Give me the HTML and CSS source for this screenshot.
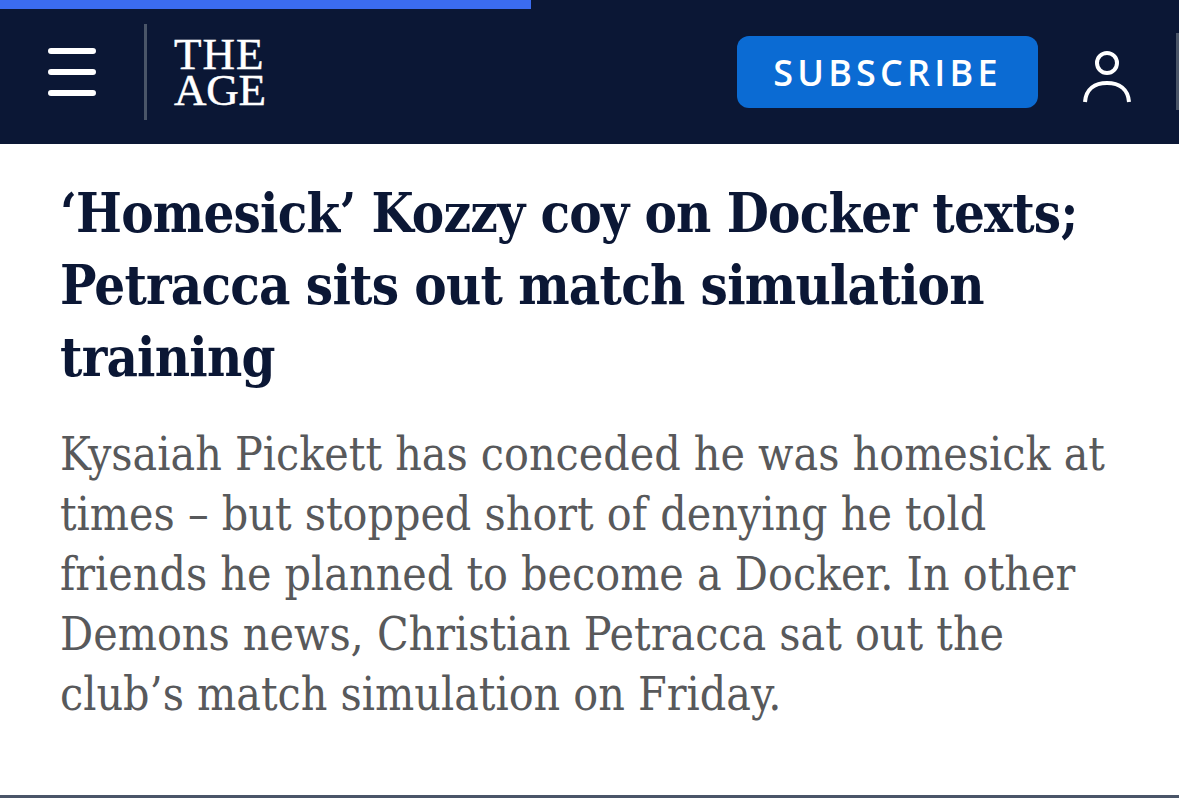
FILE: index.html
```html
<!DOCTYPE html>
<html lang="en">
<head>
<meta charset="utf-8">
<title>The Age</title>
<link rel="stylesheet" href="styles.css">
</head>
<body>
<div class="progress"><div class="progress-fill"></div></div>
<header class="topbar">
  <div class="brand">
    <svg class="menu-icon" viewBox="0 0 48 48" width="48" height="48" aria-hidden="true">
      <path d="M3 3H45M3 24H45M3 45H45" fill="none" stroke="#fff" stroke-width="6" stroke-linecap="round"/>
    </svg>
    <div class="divider"></div>
    <div class="logo"><span class="logo-the">THE</span><span class="logo-age">AGE</span></div>
  </div>
  <div class="actions">
    <div class="subscribe">SUBSCRIBE</div>
    <svg class="user-icon" viewBox="0 0 48 52" width="48" height="52" aria-hidden="true">
      <circle cx="24" cy="12" r="10" fill="none" stroke="#fff" stroke-width="4"/>
      <path d="M2 51C3 38 12 32 24 32S45 38 46 51" fill="none" stroke="#fff" stroke-width="4"/>
    </svg>
    <div class="edge"></div>
  </div>
</header>
<main class="article">
  <h1 class="headline">‘Homesick’ Kozzy coy on Docker texts; Petracca sits out match simulation training</h1>
  <p class="summary">Kysaiah Pickett has conceded he was homesick at times – but stopped short of denying he told friends he planned to become a Docker. In other Demons news, Christian Petracca sat out the club’s match simulation on Friday.</p>
</main>
<div class="rule"></div>
</body>
</html>
```
FILE: styles.css
```css
* { box-sizing: border-box; }
html, body { margin: 0; height: 798px; overflow: hidden; background: #fff; }
body { display: flex; flex-direction: column; }
.progress { height: 9px; background: #0b1735; }
.progress-fill { width: 531px; height: 9px; background: #3b6cf0; }
.topbar { height: 135px; background: #0b1735; display: flex; justify-content: space-between; align-items: flex-start; }
.brand { display: flex; align-items: flex-start; padding: 15px 0 0 48px; }
.menu-icon { margin-top: 24px; display: block; }
.divider { width: 3px; height: 96px; background: #4a5568; margin-left: 48px; }
.logo { margin: 12px 0 0 27px; font-family: "Liberation Serif", serif; font-size: 45px; line-height: 36px; color: #fff; -webkit-text-stroke: 0.5px #fff; }
.logo-the { display: block; letter-spacing: 1px; }
.logo-age { display: block; letter-spacing: -0.2px; }
.actions { display: flex; align-items: flex-start; }
.subscribe { margin-top: 27px; width: 301px; height: 72px; border-radius: 12px; background: #0b6bd3; color: #fff; font-family: "Open Sans", sans-serif; font-weight: 600; font-size: 36px; letter-spacing: 4.2px; line-height: 74px; text-align: center; }
.user-icon { margin: 42px 0 0 45px; display: block; }
.edge { width: 3px; height: 77px; margin: 24px 0 0 45px; background: #4a5568; }
.article { flex: 1; padding: 33px 60px 0 60px; }
.headline { margin: 0; font-family: "DejaVu Serif Condensed", "Liberation Serif", serif; font-weight: 700; font-size: 54px; letter-spacing: -0.8px; line-height: 72px; color: #0b1735; }
.summary { margin: 31px 0 0; font-family: "DejaVu Serif Condensed", "Liberation Serif", serif; font-size: 46px; line-height: 60px; color: #58595b; }
.rule { height: 3px; background: #4a5568; }
```
